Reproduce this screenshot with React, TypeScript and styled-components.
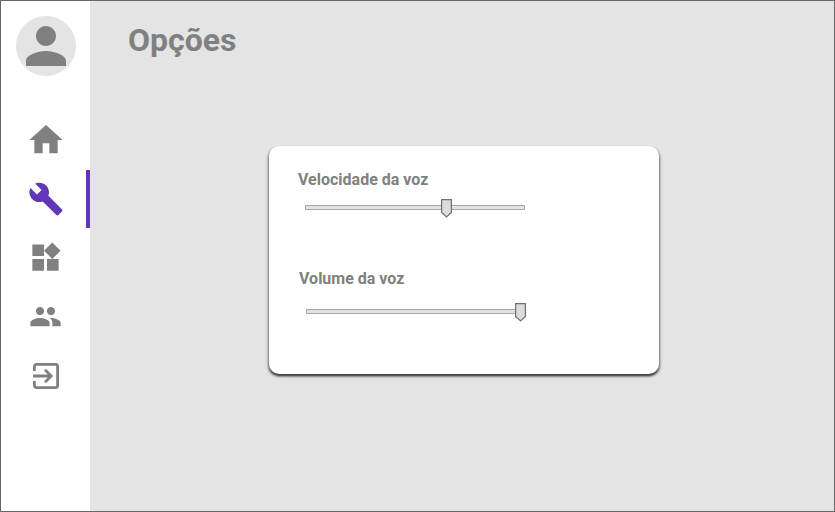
import React from "react";
import styled, { createGlobalStyle } from "styled-components";
import { MdBuild, MdHome, MdPeople, MdPerson, MdWidgets } from "react-icons/md";

const Global = createGlobalStyle`
  html, body { margin: 0; padding: 0; background: #fff; }
  body { font-family: Roboto, "Liberation Sans", sans-serif; }
`;

const Frame = styled.div`
  box-sizing: border-box;
  width: 835px;
  height: 512px;
  border: 1px solid #666;
  display: flex;
  overflow: hidden;
`;

const Sidebar = styled.aside`
  box-sizing: border-box;
  width: 89px;
  flex: none;
  background: #fff;
  padding-top: 15px;
`;

const Avatar = styled.div`
  width: 60px;
  height: 60px;
  margin-left: 15px;
  border-radius: 50%;
  background: #e4e4e4;
  color: #808080;
  display: flex;
  align-items: center;
  justify-content: center;
`;

const Nav = styled.nav`
  margin-top: 34px;
  display: flex;
  flex-direction: column;
`;

const NavItem = styled.div<{ $active?: boolean }>`
  position: relative;
  height: 59px;
  display: flex;
  align-items: center;
  justify-content: center;
  color: ${(p) => (p.$active ? "#6236b8" : "#808080")};
  ${(p) =>
    p.$active
      ? `&::after {
          content: "";
          position: absolute;
          right: 0;
          top: 1px;
          bottom: 0;
          width: 4px;
          background: #6236b8;
        }`
      : ""}
`;

const Main = styled.main`
  flex: 1;
  background: #e4e4e4;
  padding: 21px 0 0 38px;
  box-sizing: border-box;
`;

const Title = styled.h1`
  margin: 0;
  font-size: 32px;
  line-height: 36px;
  font-weight: 700;
  color: #808080;
`;

const Card = styled.section`
  box-sizing: border-box;
  width: 390px;
  height: 228px;
  margin: 88px 0 0 141px;
  padding: 24px 0 0 29px;
  background: #fff;
  border-radius: 10px;
  box-shadow: 0 2px 2px #3f3f3f, -1px 2px 3px #999, 1px 2px 3px #999;
`;

const Field = styled.div<{ $nudge: number; $gap: number }>`
  margin-left: ${(p) => p.$nudge}px;
  margin-bottom: ${(p) => p.$gap}px;
`;

const Label = styled.div`
  font-size: 16px;
  line-height: 20px;
  font-weight: 700;
  color: #808080;
`;

const Track = styled.div<{ $top: number }>`
  position: relative;
  box-sizing: border-box;
  width: 220px;
  height: 5px;
  margin: ${(p) => p.$top}px 0 0 7px;
  background: #e2e2e2;
  border: 1px solid #a8a8a8;
`;

const ThumbSvg = styled.svg<{ $left: number }>`
  position: absolute;
  left: ${(p) => p.$left}px;
  top: -7px;
  width: 11px;
  height: 19px;
  display: block;
`;

const Thumb = ({ left }: { left: number }) => (
  <ThumbSvg $left={left} viewBox="0 0 11 19">
    <path d="M.6.6h9.800v12.900L5.500 18 .6 13.500z" fill="#dcdcdc" stroke="#707070" strokeWidth="1.200" />
  </ThumbSvg>
);

const ExitIcon = () => (
  <svg width="26" height="26" viewBox="0 0 26 26" fill="none" stroke="currentColor" strokeWidth="2.800">
    <path d="M1.400 8V3.400a2 2 0 0 1 2-2h19.200a2 2 0 0 1 2 2v19.200a2 2 0 0 1-2 2H3.400a2 2 0 0 1-2-2V18" />
    <path d="M0 13h18M12 6.800 18.200 13 12 19.200" />
  </svg>
);

export default function App() {
  return (
    <>
      <Global />
      <Frame>
        <Sidebar>
          <Avatar>
            <MdPerson size={60} />
          </Avatar>
          <Nav>
            <NavItem><MdHome size={40} /></NavItem>
            <NavItem $active><MdBuild size={36} /></NavItem>
            <NavItem><MdWidgets size={35} /></NavItem>
            <NavItem><MdPeople size={33} /></NavItem>
            <NavItem><ExitIcon /></NavItem>
          </Nav>
        </Sidebar>
        <Main>
          <Title>Opções</Title>
          <Card>
            <Field $nudge={0} $gap={59}>
              <Label>Velocidade da voz</Label>
              <Track $top={15}><Thumb left={135} /></Track>
            </Field>
            <Field $nudge={1} $gap={0}>
              <Label>Volume da voz</Label>
              <Track $top={20}><Thumb left={208} /></Track>
            </Field>
          </Card>
        </Main>
      </Frame>
    </>
  );
}
